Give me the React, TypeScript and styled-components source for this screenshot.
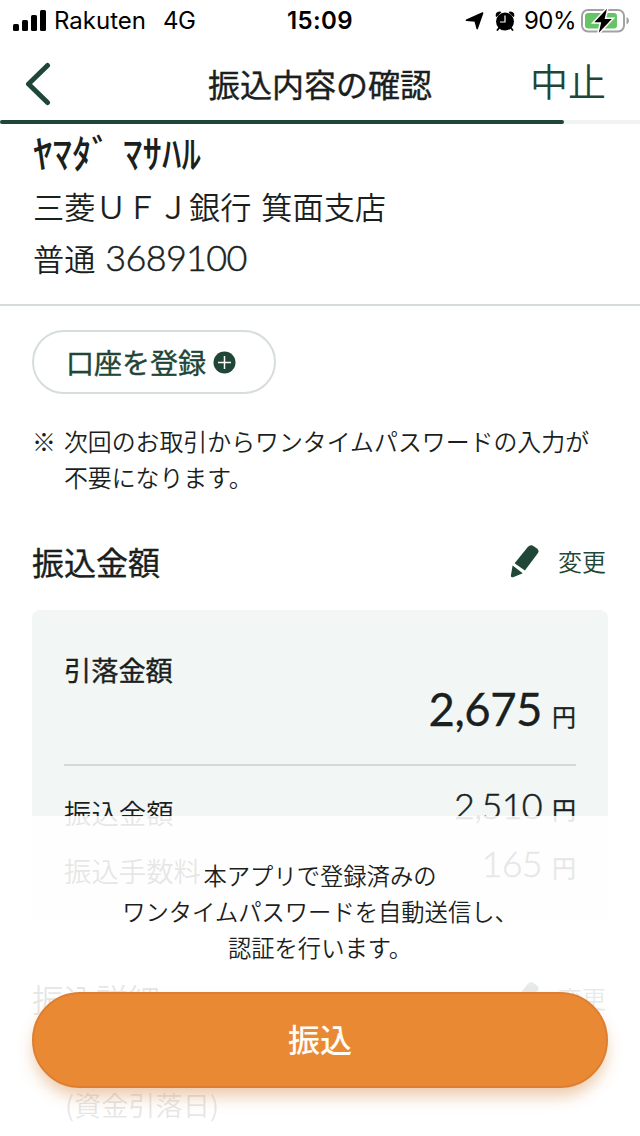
import React from "react";
import styled, { createGlobalStyle } from "styled-components";

const green = "#1f4636";
const ink = "#1b1f1e";

const Global = createGlobalStyle`
  * { box-sizing: border-box; }
  body { margin: 0; background: #fff; }
`;

const Screen = styled.div`
  position: relative;
  display: flex;
  flex-direction: column;
  width: 640px;
  height: 1136px;
  overflow: hidden;
  background: #fff;
  color: ${ink};
  font-family: "Noto Sans CJK JP", sans-serif;
`;

const StatusBar = styled.div`
  display: grid;
  grid-template-columns: 1fr auto 1fr;
  align-items: center;
  height: 40px;
  padding: 0 11px 0 13px;
  color: #000;
  font: 400 24px/40px Inter, sans-serif;
  flex: none;
`;
const StatusGroup = styled.div<{ $end?: boolean }>`
  display: flex;
  align-items: center;
  justify-content: ${(p) => (p.$end ? "flex-end" : "flex-start")};
`;
const Carrier = styled.span`
  margin: 1px 0 0 7px;
`;
const Network = styled.span`
  margin: 1px 0 0 17px;
  letter-spacing: -0.5px;
`;
const Clock = styled.span`
  margin: 1px 2px 0 0;
  font-weight: 600;
  letter-spacing: 0.4px;
`;
const Percent = styled.span`
  margin: 1px 5px 0 9px;
  letter-spacing: -0.5px;
`;

const NavBar = styled.header`
  display: grid;
  grid-template-columns: 1fr auto 1fr;
  align-items: center;
  height: 80px;
  padding: 0 34px 0 25px;
  flex: none;
`;
const Title = styled.h1`
  margin: 5px 0 0 9px;
  font-size: 32px;
  font-weight: 400;
  line-height: 40px;
  -webkit-text-stroke: 0.4px currentColor;
`;
const Cancel = styled.span`
  justify-self: end;
  color: ${green};
  font-size: 38px;
  font-weight: 350;
  line-height: 40px;
`;
const Track = styled.div`
  height: 4px;
  background: #f1f2f2;
  flex: none;
`;
const Progress = styled.div`
  width: 564px;
  height: 4px;
  border-radius: 2px;
  background: ${green};
`;

const Payee = styled.section`
  height: 182px;
  padding: 4px 33px 0;
  border-bottom: 2px solid #d5dcda;
  flex: none;
`;
const PayeeName = styled.div`
  display: flex;
  gap: 12px;
  height: 52px;
  font-size: 39px;
  font-weight: 500;
  line-height: 46px;
`;
const PayeeLine = styled.div`
  height: 52px;
  font-size: 31.2px;
  font-weight: 350;
  line-height: 51px;
  word-spacing: 3px;
  white-space: pre;
`;
const Digits = styled.span<{ $heavy?: boolean }>`
  font-family: Lato, sans-serif;
  font-size: ${(p) => (p.$heavy ? 45.5 : 36)}px;
  font-weight: ${(p) => (p.$heavy ? 400 : 300)};
  letter-spacing: ${(p) => (p.$heavy ? -0.5 : -0.7)}px;
  -webkit-text-stroke: ${(p) => (p.$heavy ? 0.3 : 0.5)}px currentColor;
`;

const Register = styled.button`
  display: flex;
  align-items: center;
  gap: 7px;
  width: 244px;
  height: 64px;
  margin: 24px 0 0 32px;
  padding: 0 0 0 32px;
  border: 2px solid #d7dddb;
  border-radius: 32px;
  background: #fff;
  color: ${green};
  font: 400 28px/60px "Noto Sans CJK JP", sans-serif;
  -webkit-text-stroke: 0.4px currentColor;
  flex: none;
`;
const Note = styled.p`
  display: flex;
  gap: 8px;
  margin: 29px 32px 0;
  height: 72px;
  font-size: 23.9px;
  font-weight: 350;
  line-height: 36px;
  white-space: nowrap;
  flex: none;
`;

const SectionHead = styled.div`
  display: flex;
  align-items: center;
  justify-content: space-between;
  height: 48px;
  padding: 0 34px 0 32px;
  flex: none;
`;
const Heading = styled.h2<{ $thin?: boolean }>`
  margin: 0;
  font-size: 32px;
  font-weight: ${(p) => (p.$thin ? 350 : 400)};
  line-height: 48px;
  -webkit-text-stroke: ${(p) => (p.$thin ? 0 : 0.4)}px currentColor;
`;
const Edit = styled.span`
  display: flex;
  align-items: center;
  gap: 19px;
  color: ${green};
  font-size: 24px;
  font-weight: 350;
  line-height: 48px;
`;
const AmountSection = styled.section`
  margin-top: 42px;
  flex: none;
`;
const Card = styled.div`
  height: 311px;
  margin: 25px 32px 0;
  padding: 40px 32px 0;
  border-radius: 8px;
  background: #f2f6f5;
`;
const Total = styled.div`
  height: 116px;
  border-bottom: 2px solid #d5dad9;
`;
const TotalLabel = styled.div`
  height: 36px;
  font-size: 27.2px;
  font-weight: 400;
  line-height: 39px;
  -webkit-text-stroke: 0.4px currentColor;
`;
const Money = styled.div`
  display: flex;
  align-items: baseline;
  justify-content: flex-end;
  gap: 10px;
  line-height: 46px;
`;
const Yen = styled.span`
  margin-bottom: 1px;
  font-size: 24px;
  font-weight: 400;
  -webkit-text-stroke: 0.3px currentColor;
`;
const Row = styled.div`
  display: flex;
  justify-content: space-between;
  height: 58px;
  font-size: 27.4px;
  font-weight: 350;
  line-height: 60px;
`;
const Rows = styled.div`
  padding-top: 16px;
`;
const DetailSection = styled.section`
  margin-top: 53px;
  flex: none;
`;
const DetailLabel = styled.div`
  margin: 58px 0 0 65px;
  font-size: 27.2px;
  font-weight: 350;
  line-height: 48px;
`;

const Footer = styled.div`
  position: absolute;
  inset: 816px 0 0 0;
  padding: 41px 32px 0;
  background: rgba(255, 255, 255, 0.89);
`;
const Message = styled.p`
  margin: 0;
  height: 135px;
  text-align: center;
  font-size: 23.3px;
  font-weight: 350;
  line-height: 36px;
`;
const Submit = styled.button`
  display: block;
  width: 576px;
  height: 96px;
  padding: 0;
  border: 2px solid #dc7f32;
  border-radius: 48px;
  background: #ea8934;
  box-shadow: 0 10px 16px -2px rgba(205, 120, 40, 0.4);
  color: #fffdf5;
  font: 500 32px/88px "Noto Sans CJK JP", sans-serif;
`;
const SubmitLabel = styled.span`
  display: block;
  padding-bottom: 4px;
`;

const Pencil = () => (
  <svg width="29" height="33" viewBox="0 0 29 33" fill={green}>
    <path d="M4.6 18.2 17.6 2.2Q19.6 -.2 22.6 .5L27 3.6Q29.6 5.8 27.6 8.6L14.9 25.4Z" />
    <path d="M2.6 20.4 12.8 28.2 3.1 32.2Q.8 32.8 .9 30.4Z" />
  </svg>
);

const Change = () => (
  <Edit>
    <Pencil />
    変更
  </Edit>
);

export default function App() {
  return (
    <Screen>
      <Global />
      <StatusBar>
        <StatusGroup>
          <svg width="34" height="22" viewBox="0 0 34 22">
            <rect x="0" y="14" width="6" height="7" rx="1.5" />
            <rect x="9" y="10" width="6" height="11" rx="1.5" />
            <rect x="18" y="5" width="6" height="16" rx="1.5" />
            <rect x="27" y="0" width="6" height="21" rx="1.5" />
          </svg>
          <Carrier>Rakuten</Carrier>
          <Network>4G</Network>
        </StatusGroup>
        <Clock>15:09</Clock>
        <StatusGroup $end>
          <svg width="19" height="18" viewBox="0 0 19 18">
            <path
              d="M17.6 1 12.2 16.6 10.2 9 1.4 8.2Z"
              stroke="#000"
              strokeWidth="1.6"
              strokeLinejoin="round"
            />
          </svg>
          <svg width="20" height="20" viewBox="0 0 20 20" style={{ marginLeft: 11 }}>
            <circle cx="10" cy="10.6" r="9" />
            <path d="M.8 5.4Q0 .6 5.2.5L6.4 1.2 1.6 5.9ZM19.2 5.4Q20 .6 14.8.5L13.6 1.2 18.4 5.9Z" />
            <path d="M4 17 2.4 19M16 17 17.6 19" stroke="#000" strokeWidth="1.8" strokeLinecap="round" />
            <path d="M10 4.6V11H5" fill="none" stroke="#fff" strokeWidth="1.2" />
          </svg>
          <Percent>90%</Percent>
          <svg width="48" height="26" viewBox="0 0 48 26">
            <rect x="1" y="2" width="42" height="21.5" rx="6" fill="#fff" stroke="#a2a2a2" strokeWidth="2" />
            <rect x="4" y="5" width="32" height="15.5" rx="3.2" fill="#65c466" />
            <path d="M45.5 9Q48 10 48 12.7T45.5 16.5Z" fill="#a2a2a2" />
            <path d="M26 .8 13.3 14.2H20.2L17.8 24.7 30.8 11.1H23.6Z" stroke="#fff" strokeWidth="3" paintOrder="stroke" />
          </svg>
        </StatusGroup>
      </StatusBar>
      <NavBar>
        <svg width="26" height="44" viewBox="0 0 26 44" fill="none" style={{ marginTop: 7 }}>
          <path d="M22.5 3.5 3.5 22 22.5 40.5" stroke={green} strokeWidth="5" strokeLinecap="round" strokeLinejoin="round" />
        </svg>
        <Title>振込内容の確認</Title>
        <Cancel>中止</Cancel>
      </NavBar>
      <Track>
        <Progress />
      </Track>

      <Payee>
        <PayeeName>
          <span>ﾔﾏﾀﾞ</span>
          <span>ﾏｻﾊﾙ</span>
        </PayeeName>
        <PayeeLine>三菱ＵＦＪ銀行 箕面支店</PayeeLine>
        <PayeeLine>
          普通 <Digits>3689100</Digits>
        </PayeeLine>
      </Payee>

      <Register>
        口座を登録
        <svg width="23" height="23" viewBox="0 0 23 23">
          <circle cx="11.5" cy="11.5" r="11" fill={green} />
          <path d="M11.5 5V18M5 11.5H18" stroke="#fff" strokeWidth="1.5" />
        </svg>
      </Register>
      <Note>
        <span>※</span>
        <span>
          次回のお取引からワンタイムパスワードの入力が
          <br />
          不要になります。
        </span>
      </Note>

      <AmountSection>
        <SectionHead>
          <Heading>振込金額</Heading>
          <Change />
        </SectionHead>
        <Card>
          <Total>
            <TotalLabel>引落金額</TotalLabel>
            <Money>
              <Digits $heavy>2,675</Digits>
              <Yen>円</Yen>
            </Money>
          </Total>
          <Rows>
            <Row>
              <span>振込金額</span>
              <Money>
                <Digits>2,510</Digits>
                <Yen>円</Yen>
              </Money>
            </Row>
            <Row>
              <span>振込手数料</span>
              <Money>
                <Digits>165</Digits>
                <Yen>円</Yen>
              </Money>
            </Row>
          </Rows>
        </Card>
      </AmountSection>

      <DetailSection>
        <SectionHead>
          <Heading $thin>振込詳細</Heading>
          <Change />
        </SectionHead>
        <DetailLabel>(資金引落日)</DetailLabel>
      </DetailSection>

      <Footer>
        <Message>
          本アプリで登録済みの
          <br />
          ワンタイムパスワードを自動送信し、
          <br />
          認証を行います。
        </Message>
        <Submit>
          <SubmitLabel>振込</SubmitLabel>
        </Submit>
      </Footer>
    </Screen>
  );
}
